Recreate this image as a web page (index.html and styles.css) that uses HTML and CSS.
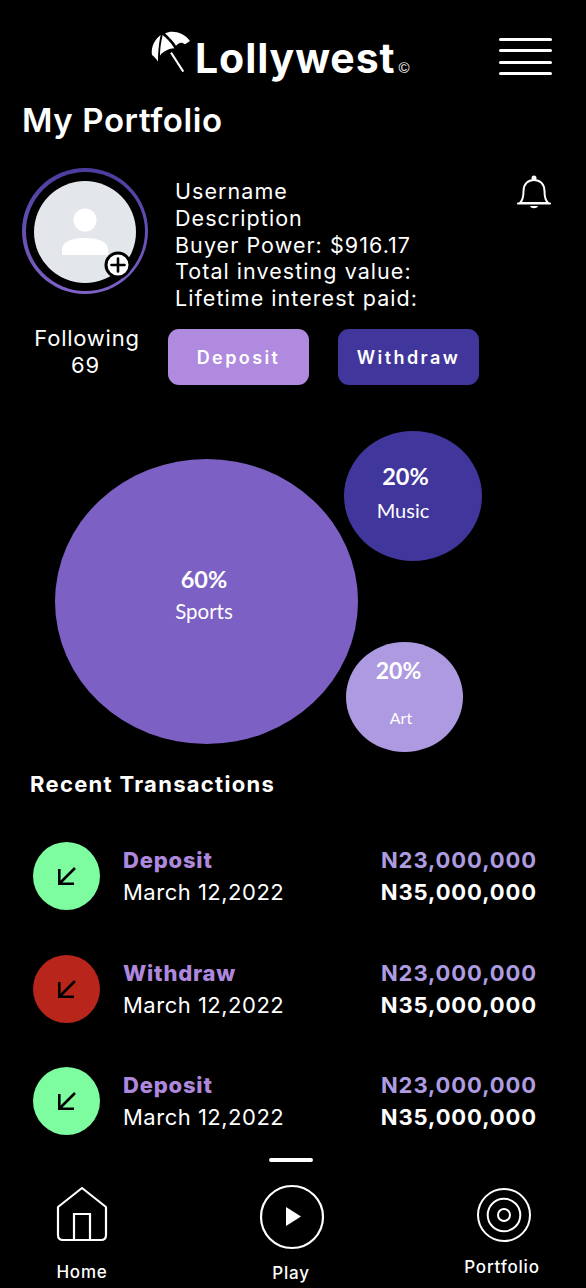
FILE: index.html
```html
<!DOCTYPE html>
<html lang="en">
<head>
<meta charset="utf-8">
<title>Lollywest - My Portfolio</title>
<link rel="stylesheet" href="styles.css">
</head>
<body>
<div class="screen">
  <header class="topbar">
    <div class="logo">
      <svg class="logo-mark" viewBox="63 45 120 130" width="40" height="43.300" aria-hidden="true">
        <path d="M92 60 C72 75 62 100 66 120 C72 125 80 132 84 140 C84 120 86 85 92 60 Z" fill="#fff"/>
        <path d="M98 60 C92 85 90 105 90 122 C98 110 118 100 133 100 C125 85 110 70 98 60 Z" fill="#fff"/>
        <path d="M105 55 C125 45 160 50 180 78 L165 88 C155 80 148 82 138 92 C130 78 115 65 105 55 Z" fill="#fff"/>
        <path d="M123 113 L160 170" stroke="#fff" stroke-width="6" fill="none"/>
      </svg>
      <span class="logo-text">Lollywest</span><span class="logo-c">©</span>
    </div>
    <div class="burger" aria-label="Menu"><i></i><i></i><i></i><i></i></div>
  </header>

  <h1 class="title">My Portfolio</h1>

  <section class="profile">
    <div class="avatar-col">
      <div class="ring">
        <div class="avatar">
          <svg viewBox="0 0 102 102" width="102" height="102" aria-hidden="true">
            <circle cx="51" cy="39" r="11.500" fill="#fff"/>
            <path d="M28 74 V69 C28 60 39 57 51 57 C63 57 74 60 74 69 V74 Z" fill="#fff"/>
          </svg>
        </div>
        <svg class="plus" viewBox="0 0 28 28" width="28" height="28" aria-hidden="true">
          <circle cx="14" cy="14" r="12" fill="#fff" stroke="#000" stroke-width="3"/>
          <path d="M14 7.500 V20.500 M7.500 14 H20.500" stroke="#000" stroke-width="2.600" stroke-linecap="round"/>
        </svg>
      </div>
    </div>
    <div class="info">
      <p>Username</p>
      <p>Description</p>
      <p>Buyer Power: $916.17</p>
      <p>Total investing value:</p>
      <p>Lifetime interest paid:</p>
    </div>
    <svg class="bell" viewBox="0 0 34 36" width="34" height="36" aria-hidden="true">
      <path d="M3 29 C6 26 6.500 22 6.500 17 C6.500 10 11 6 17 6 C23 6 27.500 10 27.500 17 C27.500 22 28 26 31 29 Z" fill="none" stroke="#fff" stroke-width="2" stroke-linejoin="round"/>
      <path d="M1 29.500 H33" stroke="#fff" stroke-width="2.200" stroke-linecap="round"/>
      <circle cx="17" cy="4" r="2.500" fill="#fff"/>
      <path d="M13 32 H21 C20 35 14 35 13 32 Z" fill="#fff"/>
    </svg>
  </section>

  <section class="actions">
    <div class="following"><span>Following</span><span>69</span></div>
    <button class="btn btn-light" type="button">Deposit</button>
    <button class="btn btn-dark" type="button">Withdraw</button>
  </section>

  <section class="bubbles">
    <div class="bubble sports"><b>60%</b><span>Sports</span></div>
    <div class="bubble music"><b>20%</b><span>Music</span></div>
    <div class="bubble art"><b>20%</b><span>Art</span></div>
  </section>

  <h2 class="recent">Recent Transactions</h2>

  <section class="tx-list">
    <div class="tx">
      <div class="tx-icon green"><svg viewBox="0 0 20 20" width="20" height="20" aria-hidden="true"><path d="M18 2 L2 18 M2.300 3 V17.700 H17" fill="none" stroke="#000" stroke-width="2.600"/></svg></div>
      <div class="tx-main"><b>Deposit</b><span>March 12,2022</span></div>
      <div class="tx-amt"><b>N23,000,000</b><strong>N35,000,000</strong></div>
    </div>
    <div class="tx">
      <div class="tx-icon red"><svg viewBox="0 0 20 20" width="20" height="20" aria-hidden="true"><path d="M18 2 L2 18 M2.300 3 V17.700 H17" fill="none" stroke="#000" stroke-width="2.600"/></svg></div>
      <div class="tx-main"><b>Withdraw</b><span>March 12,2022</span></div>
      <div class="tx-amt"><b>N23,000,000</b><strong>N35,000,000</strong></div>
    </div>
    <div class="tx">
      <div class="tx-icon green"><svg viewBox="0 0 20 20" width="20" height="20" aria-hidden="true"><path d="M18 2 L2 18 M2.300 3 V17.700 H17" fill="none" stroke="#000" stroke-width="2.600"/></svg></div>
      <div class="tx-main"><b>Deposit</b><span>March 12,2022</span></div>
      <div class="tx-amt"><b>N23,000,000</b><strong>N35,000,000</strong></div>
    </div>
  </section>

  <div class="indicator"></div>

  <nav class="nav">
    <a class="nav-item nav-home">
      <svg viewBox="0 0 52 56" width="52" height="56" aria-hidden="true">
        <path d="M26 2 L50 21 V49 Q50 54 45 54 H7 Q2 54 2 49 V21 Z" fill="none" stroke="#fff" stroke-width="2.200" stroke-linejoin="round"/>
        <path d="M18 54 V28 H34 V54" fill="none" stroke="#fff" stroke-width="2.200"/>
      </svg>
      <span>Home</span>
    </a>
    <a class="nav-item nav-play">
      <svg viewBox="0 0 66 66" width="66" height="66" aria-hidden="true">
        <circle cx="33" cy="33" r="31" fill="none" stroke="#fff" stroke-width="2.200"/>
        <path d="M27 23 L42 32.500 L27 42 Z" fill="#fff"/>
      </svg>
      <span>Play</span>
    </a>
    <a class="nav-item nav-portfolio">
      <svg viewBox="0 0 56 56" width="56" height="56" aria-hidden="true">
        <circle cx="28" cy="28" r="26" fill="none" stroke="#fff" stroke-width="2"/>
        <circle cx="28" cy="28" r="16.300" fill="none" stroke="#fff" stroke-width="2"/>
        <circle cx="28" cy="28" r="6" fill="none" stroke="#fff" stroke-width="2"/>
      </svg>
      <span>Portfolio</span>
    </a>
  </nav>
</div>
</body>
</html>
```

FILE: styles.css
```css
* { box-sizing: border-box; }
html, body { margin: 0; padding: 0; background: #000; }
body { font-family: "Inter", "Roboto", "Liberation Sans", sans-serif; color: #fff; }
.screen { width: 586px; height: 1288px; overflow: hidden; background: #000; }

.topbar { height: 98px; display: grid; grid-template-columns: 1fr auto; align-items: start; padding: 30px 34px 0 151px; }
.logo { display: flex; align-items: flex-start; }
.logo-mark { flex: none; }
.logo-text { font-weight: 700; font-size: 41px; line-height: 50px; margin: 3px 0 0 4px; letter-spacing: .9px; }
.logo-c { font-family: "Liberation Sans", sans-serif; font-size: 15px; line-height: 14px; margin: 31px 0 0 3px; }
.burger { width: 53px; display: flex; flex-direction: column; gap: 8.300px; padding-top: 8px; }
.burger i { display: block; height: 3px; background: #fff; border-radius: 2px; }

.title { margin: 0; padding-left: 22px; font-size: 33px; font-weight: 600; line-height: 44px; letter-spacing: .6px; height: 70px; }

.profile { display: flex; padding-left: 22px; height: 153px; }
.avatar-col { width: 153px; flex: none; }
.ring { width: 126px; height: 126px; border-radius: 50%; background: linear-gradient(180deg, #4a3d9e, #7f62c6); position: relative; }
.ring::before { content: ""; position: absolute; inset: 3.500px; border-radius: 50%; background: #000; }
.avatar { position: absolute; left: 12px; top: 13px; width: 102px; height: 102px; border-radius: 50%; background: #e3e6ea; }
.avatar svg { display: block; }
.plus { position: absolute; left: 82px; top: 82.500px; }
.info { flex: 1; padding-top: 10px; }
.info p { margin: 0; font-size: 21.500px; line-height: 26.800px; letter-spacing: 1.050px; font-weight: 400; white-space: nowrap; }
.bell { flex: none; margin: 6px 35px 0 0; }

.actions { display: flex; align-items: flex-start; padding-left: 22px; height: 102px; margin-top: 8px; }
.following { width: 146px; padding-right: 16px; margin-top: -4px; display: flex; flex-direction: column; align-items: center; font-size: 22px; line-height: 26.500px; letter-spacing: .75px; }
.following span:last-child { margin-right: 3px; }
.btn { width: 141px; height: 56px; border: 0; border-radius: 11px; color: #fff; font-family: inherit; font-weight: 600; font-size: 18px; letter-spacing: 2.400px; }
.btn-light { background: #b08ade; margin-right: 29px; }
.btn-dark { background: #41369b; }

.bubbles { position: relative; height: 323px; }
.bubble { position: absolute; border-radius: 50%; display: flex; flex-direction: column; align-items: center; font-family: "Lato", sans-serif; color: #fff; }
.bubble b { font-weight: 700; }
.sports { left: 55px; top: 28px; width: 303px; height: 285px; background: #7c60c4; padding-top: 105px; padding-right: 5px; }
.sports b { font-size: 23.500px; line-height: 30px; }
.sports span { font-size: 20.500px; line-height: 34px; }
.music { left: 344px; top: 0; width: 138px; height: 130px; background: #41369b; padding-top: 30px; }
.music b { font-size: 23.500px; line-height: 30px; margin-right: 15px; }
.music span { font-size: 20px; line-height: 38px; margin-right: 20px; }
.art { left: 346px; top: 211px; width: 117px; height: 110px; background: #ad9ae0; padding-top: 13px; }
.art b { font-size: 23px; line-height: 30px; margin-right: 12px; }
.art span { font-size: 16px; line-height: 34px; margin-top: 16px; margin-right: 7px; }

.recent { margin: 16px 0 0; padding-left: 30px; font-size: 22px; font-weight: 700; line-height: 28px; letter-spacing: 1.300px; height: 72px; }

.tx-list { padding: 0 49px 0 33px; }
.tx { display: flex; align-items: center; height: 68px; margin-bottom: 44.500px; }
.tx-icon { width: 67px; height: 68px; flex: none; border-radius: 50%; display: flex; align-items: center; justify-content: center; }
.tx-icon.green { background: #7dfd9f; }
.tx-icon.red { background: #b8251a; }
.tx-main { flex: 1; padding-left: 23px; display: flex; flex-direction: column; }
.tx-main b { color: #ae88dc; font-size: 22px; line-height: 32px; font-weight: 800; letter-spacing: .8px; }
.tx-main span { font-size: 22px; line-height: 32px; letter-spacing: .5px; }
.tx-amt { display: flex; flex-direction: column; align-items: flex-end; font-size: 22px; line-height: 32px; letter-spacing: .9px; }
.tx-amt b { color: #ae9ce0; font-weight: 700; }
.tx-amt strong { color: #fff; font-weight: 700; }

.indicator { width: 44px; height: 4px; margin: -22px 0 0 269px; background: #fff; border-radius: 2px; }
.nav { display: grid; grid-template-columns: 164px 254px 168px; margin-top: 22px; align-items: start; }
.nav-item { display: flex; flex-direction: column; align-items: center; font-size: 17px; font-weight: 500; letter-spacing: .8px; }
.nav-item svg { display: block; }
.nav-home { padding-top: 2px; }
.nav-home span { margin-top: 20px; }
.nav-play svg { margin-left: 2px; }
.nav-play span { margin-top: 13px; }
.nav-portfolio { padding-top: 3px; }
.nav-portfolio svg { margin-left: 3px; }
.nav-portfolio span { margin-top: 14px; }
```
